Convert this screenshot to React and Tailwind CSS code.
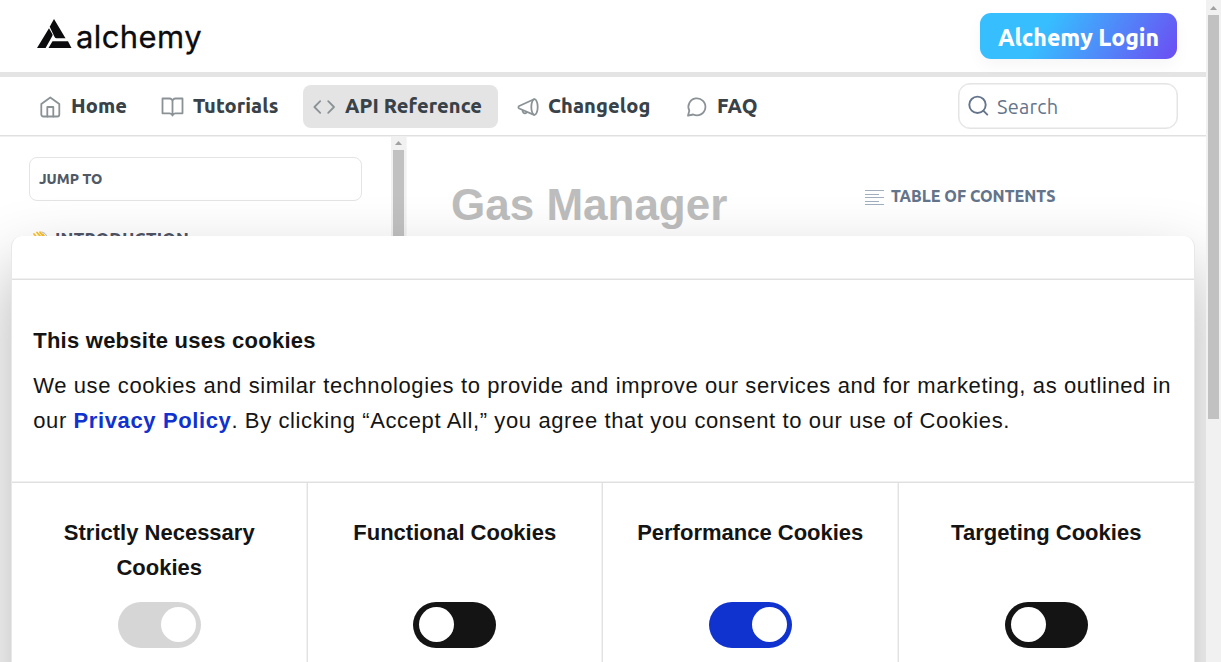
import React from "react";

const ui = "font-[Ubuntu,'Noto_Sans','Open_Sans',sans-serif]";

const icon = {
  width: 22,
  height: 22,
  viewBox: "0 0 22 22",
  fill: "none",
  stroke: "#8b9296",
  strokeWidth: 1.8,
  strokeLinecap: "round",
  strokeLinejoin: "round",
};

function HomeIcon() {
  return (
    <svg {...icon}>
      <path d="M2.3 8 11.3 1.4l9 6.6v10.500a2 2 0 0 1-2 2h-14a2 2 0 0 1-2-2z" />
      <path d="M8.300 20.500V11h6v9.500" />
    </svg>
  );
}

function BookIcon() {
  return (
    <svg {...icon} width="24" viewBox="0 0 24 22">
      <path d="M2.500 2.500H9.500a3.100 3.100 0 0 1 3 3.200V19.500a3 3 0 0 0-2.800-2.200H2.500zM22.500 2.500H15.500a3.100 3.100 0 0 0-3 3.200V19.500a3 3 0 0 1 2.800-2.200h7.200z" />
    </svg>
  );
}

function CodeIcon() {
  return (
    <svg {...icon} width="24" viewBox="0 0 24 22">
      <path d="M8.200 5.200 2.400 11l5.800 5.800M16.200 5.200l5.800 5.800-5.800 5.800" />
    </svg>
  );
}

function MegaphoneIcon() {
  return (
    <svg {...icon}>
      <ellipse cx="17.500" cy="11" rx="3.200" ry="7.800" />
      <path d="M17 3.200 2.200 10a1.400 1.400 0 0 0 0 2.500L17 18.800M5.500 14.200c.2 2.400 1.300 3.300 2.700 3.100 1-.2 1.600-.8 1.800-1.400" />
    </svg>
  );
}

function ChatIcon() {
  return (
    <svg {...icon}>
      <path d="M3.300 14.600a8.500 8.500 0 1 1 3.900 3.900L2 19.700z" />
    </svg>
  );
}

function SearchIcon() {
  return (
    <svg width="22" height="22" viewBox="0 0 22 22" fill="none" stroke="#64748b" strokeWidth="1.9" strokeLinecap="round">
      <circle cx="10.500" cy="9.800" r="8.200" />
      <path d="m16.500 15.800 3.800 3.800" />
    </svg>
  );
}

function Logo() {
  return (
    <div className="flex h-full w-[170px] items-start">
      <svg className="mt-[18px] shrink-0" width="36" height="32" viewBox="0 0 36 32" fill="#0c0c0e">
        <path d="M17 1 28.500 20.300H19.600q-1.300 0-2-1.300L12.700 8.700z" />
        <path d="m12 10.300 3.300 5.700q.6 1 0 2L8.600 30H0z" />
        <path d="M15.500 23.300H31L34.500 30H11.500z" />
      </svg>
      <span className="mt-[17px] ml-[3px] whitespace-nowrap font-[Inter,sans-serif] text-[31px] leading-[40px] tracking-[0.400px] text-[#0c0c0e] [-webkit-text-stroke:0.300px_#0c0c0e]">
        alchemy
      </span>
    </div>
  );
}

function NavItem({ Icon, label, box, text, active }) {
  return (
    <div className={`flex h-[43px] shrink-0 items-center rounded-lg ${box} ${active ? "bg-[#e4e4e4]" : ""}`}>
      <span className="flex w-6 shrink-0 justify-center pt-px">
        <Icon />
      </span>
      <span className={`whitespace-nowrap text-[20px] leading-[24px] font-extrabold tracking-[0.1px] text-[#384248] ${text}`}>{label}</span>
    </div>
  );
}

function Scrollbar({ thumb }) {
  return (
    <div className="flex h-full w-[15px] shrink-0 flex-col items-center bg-[#f1f1f1]">
      <svg className="shrink-0" width="15" height="15" viewBox="0 0 15 15">
        <path d="M4 10 7.5 6 11 10z" fill="#a0a0a0" />
      </svg>
      <div className={`w-[11px] shrink-0 bg-[#c1c1c1] ${thumb}`} />
    </div>
  );
}

function Toggle({ track, on }) {
  return (
    <div className={`flex h-[46px] w-[83px] items-center rounded-full ${track} ${on ? "justify-end pr-[4.5px]" : "pl-[6px]"}`}>
      <div className="size-[35px] rounded-full bg-white" />
    </div>
  );
}

const categories = [
  { label: "Strictly Necessary Cookies", track: "bg-[#d6d6d6]", on: true },
  { label: "Functional Cookies", track: "bg-[#141414]", on: false },
  { label: "Performance Cookies", track: "bg-[#1032cf]", on: true },
  { label: "Targeting Cookies", track: "bg-[#141414]", on: false },
];

function CookieDialog() {
  return (
    <div className="absolute top-[236px] left-[11px] h-[700px] w-[1184px] rounded-[11px] border-x border-[#e8e8e8] bg-white font-['Liberation_Sans',sans-serif] text-[22px] leading-[35px] text-[#141414] shadow-[0_32px_68px_rgba(0,0,0,0.3)]">
      <div className="h-[44px] border-b border-[#e0e0e0] shadow-[inset_0_-1px_0_#f0f0f0]" />
      <div className="h-[203px] border-b border-[#e0e0e0] pt-[43px] pl-[21.2px] shadow-[inset_0_-1px_0_#f0f0f0]">
        <h2 className="font-bold tracking-[0.25px]">This website uses cookies</h2>
        <p className="mt-[10px] whitespace-nowrap tracking-[0.615px]">
          We use cookies and similar technologies to provide and improve our services and for marketing, as outlined in
          <br />
          our <a className="font-bold text-[#1032cf]">Privacy Policy</a>. By clicking “Accept All,” you agree that you
          consent to our use of Cookies.
        </p>
      </div>
      <div className="grid h-[453px] grid-cols-4">
        {categories.map((c, i) => (
          <div
            key={c.label}
            className={`flex flex-col items-center pt-8 ${i < 3 ? "border-r border-[#e2e2e2] shadow-[inset_-1px_0_0_#f2f2f2]" : ""}`}
          >
            <div className="h-[70px] w-[240px] text-center font-bold">{c.label}</div>
            <div className="mt-[16.5px]">
              <Toggle track={c.track} on={c.on} />
            </div>
          </div>
        ))}
      </div>
    </div>
  );
}

export default function App() {
  return (
    <div className={`flex h-[662px] w-[1221px] overflow-hidden bg-white ${ui}`}>
      <div className="relative flex h-full w-[1206px] shrink-0 flex-col overflow-hidden">
        <header className="flex h-[77px] shrink-0 items-start justify-between border-b-[5px] border-[#e4e4e4] pr-[29px] pl-[37px]">
          <Logo />
          <button className="mt-[13px] h-[46px] w-[197px] rounded-[11px] bg-[linear-gradient(121deg,#36beff_33%,#733ff1_108%)] pt-[2px] text-[23.1px] font-extrabold tracking-[-0.05px] whitespace-nowrap text-white shadow-[0_6px_16px_rgba(0,0,0,0.04)]">
            Alchemy Login
          </button>
        </header>
        <nav className="relative flex h-[59px] shrink-0 items-center justify-between border-b border-[#e0e0e0] pr-[28px] pl-[38px] shadow-[0_1px_0_#f0f0f0]">
          <div className="flex">
            <NavItem Icon={HomeIcon} label="Home" box="w-[122px]" text="ml-[9px]" />
            <NavItem Icon={BookIcon} label="Tutorials" box="w-[143px]" text="ml-[9px]" />
            <NavItem Icon={CodeIcon} label="API Reference" box="w-[195px] pl-[9px]" text="ml-[9px]" active />
            <NavItem Icon={MegaphoneIcon} label="Changelog" box="w-[187px] pl-[18px]" text="ml-[8px]" />
            <NavItem Icon={ChatIcon} label="FAQ" box="w-[90px]" text="ml-[8px]" />
          </div>
          <div className="flex h-[46px] w-[220px] items-center rounded-xl border border-[#e4e4e4] pl-2 text-[20px] tracking-[0.2px] text-[#64748b] shadow-[inset_0_0_0_0.5px_#e4e4e4]">
            <SearchIcon />
            <span className="mt-[2px] ml-2">Search</span>
          </div>
        </nav>
        <div className="flex min-h-0 flex-1">
          <aside className="flex w-[391px] shrink-0 flex-col pt-[21px] pl-[29px]">
            <div className="flex h-[44px] w-[333px] shrink-0 items-center rounded-lg border border-[#e4e4e4] pt-[2px] pl-[9px] text-[14.4px] font-extrabold text-[#4f5a66]">
              JUMP TO
            </div>
            <div className="mt-[27px] flex items-center gap-[6px] text-[17px] leading-[22px] font-extrabold tracking-[0.25px] text-[#4f5566]">
              <svg width="20" height="20" viewBox="0 0 20 20" fill="none" strokeWidth="1.8" strokeLinecap="round">
                <path d="m5 5 6 7M8 3.500l6 7M11 3.200l5 6M14 5.500l3 5" stroke="#fbbf24" />
                <path d="m13 3 3 1.500 1.500 2" stroke="#b4bcc4" strokeWidth="1" />
                <path d="M5 9c-1 6 3 9 7 8s6-4 5-8z" fill="#fbbf24" />
              </svg>
              <span>INTRODUCTION</span>
            </div>
          </aside>
          <div className="-mt-px flex shrink-0">
            <Scrollbar thumb="h-[400px]" />
          </div>
          <main className="flex flex-1 border-l border-[#f6f6f6] pl-[44px]">
            <h1 className="mt-[43px] w-[414px] font-['Liberation_Sans',sans-serif] text-[44px] leading-[52px] font-bold text-[#bdbdbd]">
              Gas Manager
            </h1>
            <div className="mt-[49px] flex h-[22px] items-center gap-[7px] text-[16px] font-extrabold whitespace-nowrap text-[#64748b]">
              <svg width="19" height="16" viewBox="0 0 19 16" stroke="#a0aec0" strokeWidth="1" className="mt-[3px]">
                <path d="M0 .5h19M0 4.5h14M0 7.5h19M0 11.5h14M0 14.5h19" />
              </svg>
              <span>TABLE OF CONTENTS</span>
            </div>
          </main>
        </div>
        <CookieDialog />
      </div>
      <Scrollbar thumb="h-[404px]" />
    </div>
  );
}
